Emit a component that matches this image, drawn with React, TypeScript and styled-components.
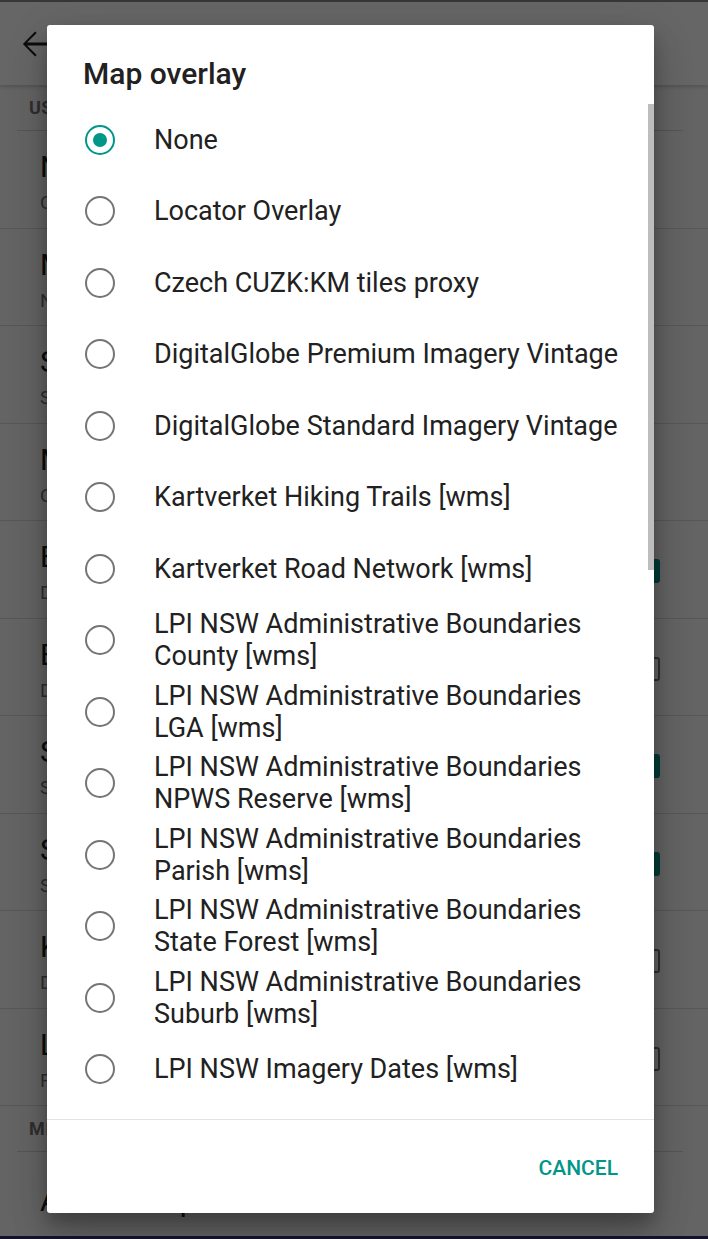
import React, { useState } from 'react'
import styled, { createGlobalStyle } from 'styled-components'

const GlobalStyle = createGlobalStyle`
  html, body {
    margin: 0;
    padding: 0;
    background: #13122b;
  }
  body {
    font-family: Roboto, "Noto Sans", "Liberation Sans", sans-serif;
    -webkit-font-smoothing: antialiased;
  }
  * {
    box-sizing: border-box;
  }
`

const Screen = styled.div`
  width: 708px;
  height: 1239px;
  display: flex;
  flex-direction: column;
  overflow: hidden;
`

const PageArea = styled.div`
  position: relative;
  flex: 1;
  overflow: hidden;
  background: #fafafa;
`

const StatusStrip = styled.div`
  height: 2px;
  background: #8c8c8c;
`

const Toolbar = styled.div`
  height: 83px;
  display: flex;
  align-items: center;
  padding-left: 15px;
  background: #ffffff;
  box-shadow: 0 2px 4px rgba(0, 0, 0, 0.18);
  position: relative;
  z-index: 1;
  color: #212121;
`

const SectionHeader = styled.div`
  padding: 12px 0 11px 29px;
  font-size: 18px;
  line-height: 22px;
  font-weight: 700;
  letter-spacing: 0.4px;
  text-transform: uppercase;
  color: #757575;
`

const HeaderRule = styled.div`
  height: 1px;
  margin: 0 25px 0 17px;
  background: #d4d4d4;
`

const PrefRow = styled.div<{ $single?: boolean }>`
  height: 97.5px;
  display: flex;
  align-items: ${({ $single }) => ($single ? 'center' : 'flex-start')};
  padding: ${({ $single }) => ($single ? '0 48px 0 40px' : '18px 48px 0 40px')};
  border-bottom: ${({ $single }) => ($single ? 'none' : '1px solid #d9d9d9')};
`

const PrefText = styled.div`
  flex: 1;
  display: flex;
  flex-direction: column;
  gap: 6px;
`

const PrefTitle = styled.div`
  font-size: 30px;
  line-height: 36px;
  color: #212121;
  white-space: nowrap;
`

const PrefSummary = styled.div`
  font-size: 19px;
  line-height: 24px;
  color: #757575;
  white-space: nowrap;
`

const CheckBox = styled.div<{ $checked: boolean }>`
  width: 24px;
  height: 24px;
  margin-top: 20px;
  border-radius: 3px;
  background: ${({ $checked }) => ($checked ? '#009688' : 'transparent')};
  border: ${({ $checked }) => ($checked ? 'none' : '2.5px solid #757575')};
`

const Scrim = styled.div`
  position: absolute;
  inset: 0;
  background: rgba(0, 0, 0, 0.6);
  z-index: 2;
`

const Dialog = styled.div`
  position: absolute;
  left: 47px;
  top: 25px;
  width: 607px;
  height: 1188px;
  z-index: 3;
  display: flex;
  flex-direction: column;
  background: #ffffff;
  border-radius: 3px;
  box-shadow: 0 11px 15px rgba(0, 0, 0, 0.2), 0 24px 38px rgba(0, 0, 0, 0.14),
    0 9px 46px rgba(0, 0, 0, 0.12);
  overflow: hidden;
`

const DialogTitle = styled.div`
  padding: 32px 36px 13px;
  font-size: 30px;
  line-height: 34px;
  font-weight: 500;
  color: #212121;
`

const OptionList = styled.div`
  position: relative;
  height: 1015px;
  overflow: hidden;
`

const ScrollThumb = styled.div`
  position: absolute;
  top: 0;
  right: 0;
  width: 6px;
  height: 466px;
  background: #bdbdbd;
`

const OptionRow = styled.label`
  height: 71.5px;
  display: flex;
  align-items: center;
  padding: 0 28px 0 38px;
  gap: 39px;
  cursor: pointer;
`

const Radio = styled.span<{ $checked: boolean }>`
  flex: none;
  width: 30px;
  height: 30px;
  border-radius: 50%;
  border: 2.7px solid ${({ $checked }) => ($checked ? '#009688' : '#757575')};
  display: flex;
  align-items: center;
  justify-content: center;

  &::after {
    content: '';
    width: 14px;
    height: 14px;
    border-radius: 50%;
    background: #009688;
    display: ${({ $checked }) => ($checked ? 'block' : 'none')};
  }
`

const OptionLabel = styled.span`
  flex: 1;
  font-size: 27px;
  line-height: 32px;
  color: #212121;
`

const ButtonBar = styled.div`
  flex: 1;
  display: flex;
  align-items: center;
  justify-content: flex-end;
  padding: 3px 36px 0 0;
  border-top: 1px solid #e3e3e3;
`

const TextButton = styled.button`
  border: none;
  background: none;
  padding: 0;
  font-family: inherit;
  font-size: 21px;
  font-weight: 500;
  color: #009688;
  text-transform: uppercase;
  cursor: pointer;
`

const NavBar = styled.div`
  height: 3px;
  background: #13122b;
`

const BackArrow = () => (
  <svg width="42" height="42" viewBox="0 0 24 24" fill="currentColor">
    <path d="M20 11.2H6.9l5.5-5.5-0.9-0.9L4.5 12l7 7.2 0.9-0.9-5.5-5.5H20z" />
  </svg>
)

const userPrefs = [
  { title: 'Nearby POI display', summary: 'Configure which objects are shown' },
  { title: 'Map style', summary: 'Node and way rendering' },
  { title: 'Scale display', summary: 'Show a scale bar on the map' },
  { title: 'Map background', summary: 'Current background imagery' },
  { title: 'Enable lock', summary: 'Disable editing by default', check: true },
  { title: 'Enable always on', summary: 'Don’t turn the screen off', check: false },
  { title: 'Show statistics', summary: 'Show object counts', check: true },
  { title: 'Show tolerance', summary: 'Show touch tolerance', check: true },
  { title: 'Keep screen on', summary: 'Don’t dim the screen while mapping', check: false },
  { title: 'Large drag area', summary: 'For selected nodes', check: false },
]

const overlays = [
  'None',
  'Locator Overlay',
  'Czech CUZK:KM tiles proxy',
  'DigitalGlobe Premium Imagery Vintage',
  'DigitalGlobe Standard Imagery Vintage',
  'Kartverket Hiking Trails [wms]',
  'Kartverket Road Network [wms]',
  'LPI NSW Administrative Boundaries County [wms]',
  'LPI NSW Administrative Boundaries LGA [wms]',
  'LPI NSW Administrative Boundaries NPWS Reserve [wms]',
  'LPI NSW Administrative Boundaries Parish [wms]',
  'LPI NSW Administrative Boundaries State Forest [wms]',
  'LPI NSW Administrative Boundaries Suburb [wms]',
  'LPI NSW Imagery Dates [wms]',
  'LPI NSW Topographic Map [wms]',
  'OpenRailwayMap',
  'Strava Cycling Heatmap',
]

const App = () => {
  const [selected, setSelected] = useState(0)

  return (
    <Screen>
      <GlobalStyle />
      <PageArea>
        <StatusStrip />
        <Toolbar>
          <BackArrow />
        </Toolbar>
        <SectionHeader>User interface</SectionHeader>
        <HeaderRule />
        {userPrefs.map((p) => (
          <PrefRow key={p.title}>
            <PrefText>
              <PrefTitle>{p.title}</PrefTitle>
              <PrefSummary>{p.summary}</PrefSummary>
            </PrefText>
            {p.check !== undefined && <CheckBox $checked={p.check} />}
          </PrefRow>
        ))}
        <SectionHeader>Miscellaneous</SectionHeader>
        <HeaderRule />
        <PrefRow $single>
          <PrefTitle>Advanced preferences</PrefTitle>
        </PrefRow>

        <Scrim />
        <Dialog>
          <DialogTitle>Map overlay</DialogTitle>
          <OptionList>
            {overlays.map((name, i) => (
              <OptionRow key={name} onClick={() => setSelected(i)}>
                <Radio $checked={selected === i} />
                <OptionLabel>{name}</OptionLabel>
              </OptionRow>
            ))}
            <ScrollThumb />
          </OptionList>
          <ButtonBar>
            <TextButton>Cancel</TextButton>
          </ButtonBar>
        </Dialog>
      </PageArea>
      <NavBar />
    </Screen>
  )
}

export default App
